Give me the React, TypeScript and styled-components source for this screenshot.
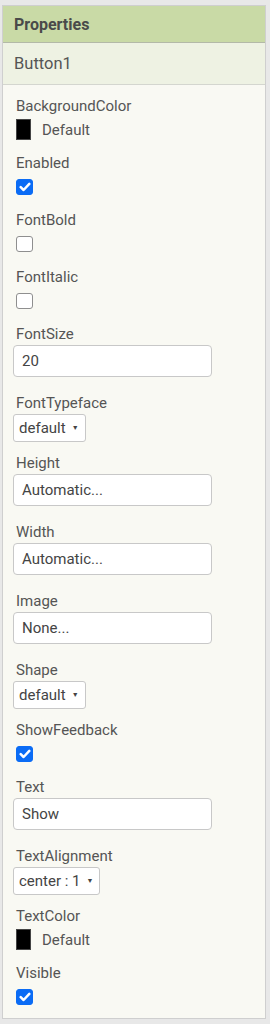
import { FC } from 'react';
import styled, { createGlobalStyle } from 'styled-components';

const GlobalStyle = createGlobalStyle`
  html, body {
    margin: 0;
    padding: 0;
    background: #e8e8e8;
    font-family: Roboto, "Liberation Sans", Arial, sans-serif;
  }
`;

const Page = styled.div`
  width: 270px;
  height: 1024px;
  padding: 5px 4px 0 2px;
  box-sizing: border-box;
`;

const Panel = styled.div`
  border: 1px solid #cfcfcf;
  background: #f9f9f3;
  display: flex;
  flex-direction: column;
`;

const Header = styled.div`
  height: 36px;
  display: flex;
  align-items: center;
  padding-left: 11px;
  background: #c9daa6;
  border-bottom: 1px solid #b3b9a8;
  font-size: 16px;
  font-weight: 700;
  color: #4a4a4a;
`;

const ComponentName = styled.div`
  height: 41px;
  display: flex;
  align-items: center;
  padding-left: 11px;
  background: #eef2e3;
  border-bottom: 1px solid #d4d6cf;
  font-size: 16.5px;
  color: #555;
`;

const List = styled.div`
  display: flex;
  flex-direction: column;
  padding: 12px 0 13px 13px;
`;

const Property = styled.div<{ $gap: number }>`
  display: flex;
  flex-direction: column;
  align-items: flex-start;
  margin-bottom: ${({ $gap }) => $gap}px;
  &:last-child {
    margin-bottom: 0;
  }
`;

const Label = styled.div`
  font-size: 15px;
  line-height: 18px;
  color: #555;
`;

const ColorRow = styled.div`
  display: flex;
  align-items: center;
  gap: 11px;
  margin-top: 4px;
  font-size: 15px;
  color: #555;
`;

const Swatch = styled.span`
  width: 15px;
  height: 21px;
  background: #000;
  border: 1px solid #444;
  box-sizing: border-box;
`;

const Check = styled.span<{ $on: boolean }>`
  margin-top: 7px;
  width: 17px;
  height: 16px;
  box-sizing: border-box;
  border-radius: 3px;
  display: flex;
  align-items: center;
  justify-content: center;
  background: ${({ $on }) => ($on ? '#0b6cf5' : '#fff')};
  border: 1px solid ${({ $on }) => ($on ? '#0b6cf5' : '#8f8f8f')};
`;

const TextBox = styled.div`
  margin-top: 2px;
  width: 199px;
  height: 32px;
  margin-left: -3px;
  box-sizing: border-box;
  border: 1px solid #c8c8c8;
  border-radius: 4px;
  background: #fff;
  display: flex;
  align-items: center;
  padding-left: 8px;
  font-size: 15px;
  color: #444;
`;

const Select = styled.div`
  margin-top: 2px;
  margin-left: -3px;
  height: 28px;
  box-sizing: border-box;
  border: 1px solid #c8c8c8;
  border-radius: 3px;
  background: #fff;
  display: flex;
  align-items: center;
  gap: 6px;
  padding: 0 6px 0 5px;
  font-size: 15px;
  color: #444;
`;

const Arrow = styled.span`
  font-size: 7px;
  color: #444;
`;

type Kind = 'color' | 'check' | 'text' | 'select';

interface IProp {
  name: string;
  kind: Kind;
  value?: string;
  on?: boolean;
}

const props: IProp[] = [
  { name: 'BackgroundColor', kind: 'color', value: 'Default' },
  { name: 'Enabled', kind: 'check', on: true },
  { name: 'FontBold', kind: 'check', on: false },
  { name: 'FontItalic', kind: 'check', on: false },
  { name: 'FontSize', kind: 'text', value: '20' },
  { name: 'FontTypeface', kind: 'select', value: 'default' },
  { name: 'Height', kind: 'text', value: 'Automatic...' },
  { name: 'Width', kind: 'text', value: 'Automatic...' },
  { name: 'Image', kind: 'text', value: 'None...' },
  { name: 'Shape', kind: 'select', value: 'default' },
  { name: 'ShowFeedback', kind: 'check', on: true },
  { name: 'Text', kind: 'text', value: 'Show' },
  { name: 'TextAlignment', kind: 'select', value: 'center : 1' },
  { name: 'TextColor', kind: 'color', value: 'Default' },
  { name: 'Visible', kind: 'check', on: true }
];

const gaps: Record<Kind, number> = {
  color: 14,
  check: 16,
  text: 17,
  select: 12
};

const Tick = () => (
  <svg width="12" height="10" viewBox="0 0 12 10">
    <path
      d="M1.7 5.2 L4.6 8 L10.3 1.9"
      fill="none"
      stroke="#fff"
      strokeWidth="2.5"
      strokeLinecap="round"
      strokeLinejoin="round"
    />
  </svg>
);

const Editor: FC<{ prop: IProp }> = ({ prop }) => {
  switch (prop.kind) {
    case 'color':
      return (
        <ColorRow>
          <Swatch />
          {prop.value}
        </ColorRow>
      );
    case 'check':
      return <Check $on={!!prop.on}>{prop.on && <Tick />}</Check>;
    case 'text':
      return <TextBox>{prop.value}</TextBox>;
    default:
      return (
        <Select>
          {prop.value}
          <Arrow>▼</Arrow>
        </Select>
      );
  }
};

export default function App() {
  return (
    <Page>
      <GlobalStyle />
      <Panel>
        <Header>Properties</Header>
        <ComponentName>Button1</ComponentName>
        <List>
          {props.map(p => (
            <Property key={p.name} $gap={gaps[p.kind]}>
              <Label>{p.name}</Label>
              <Editor prop={p} />
            </Property>
          ))}
        </List>
      </Panel>
    </Page>
  );
}
